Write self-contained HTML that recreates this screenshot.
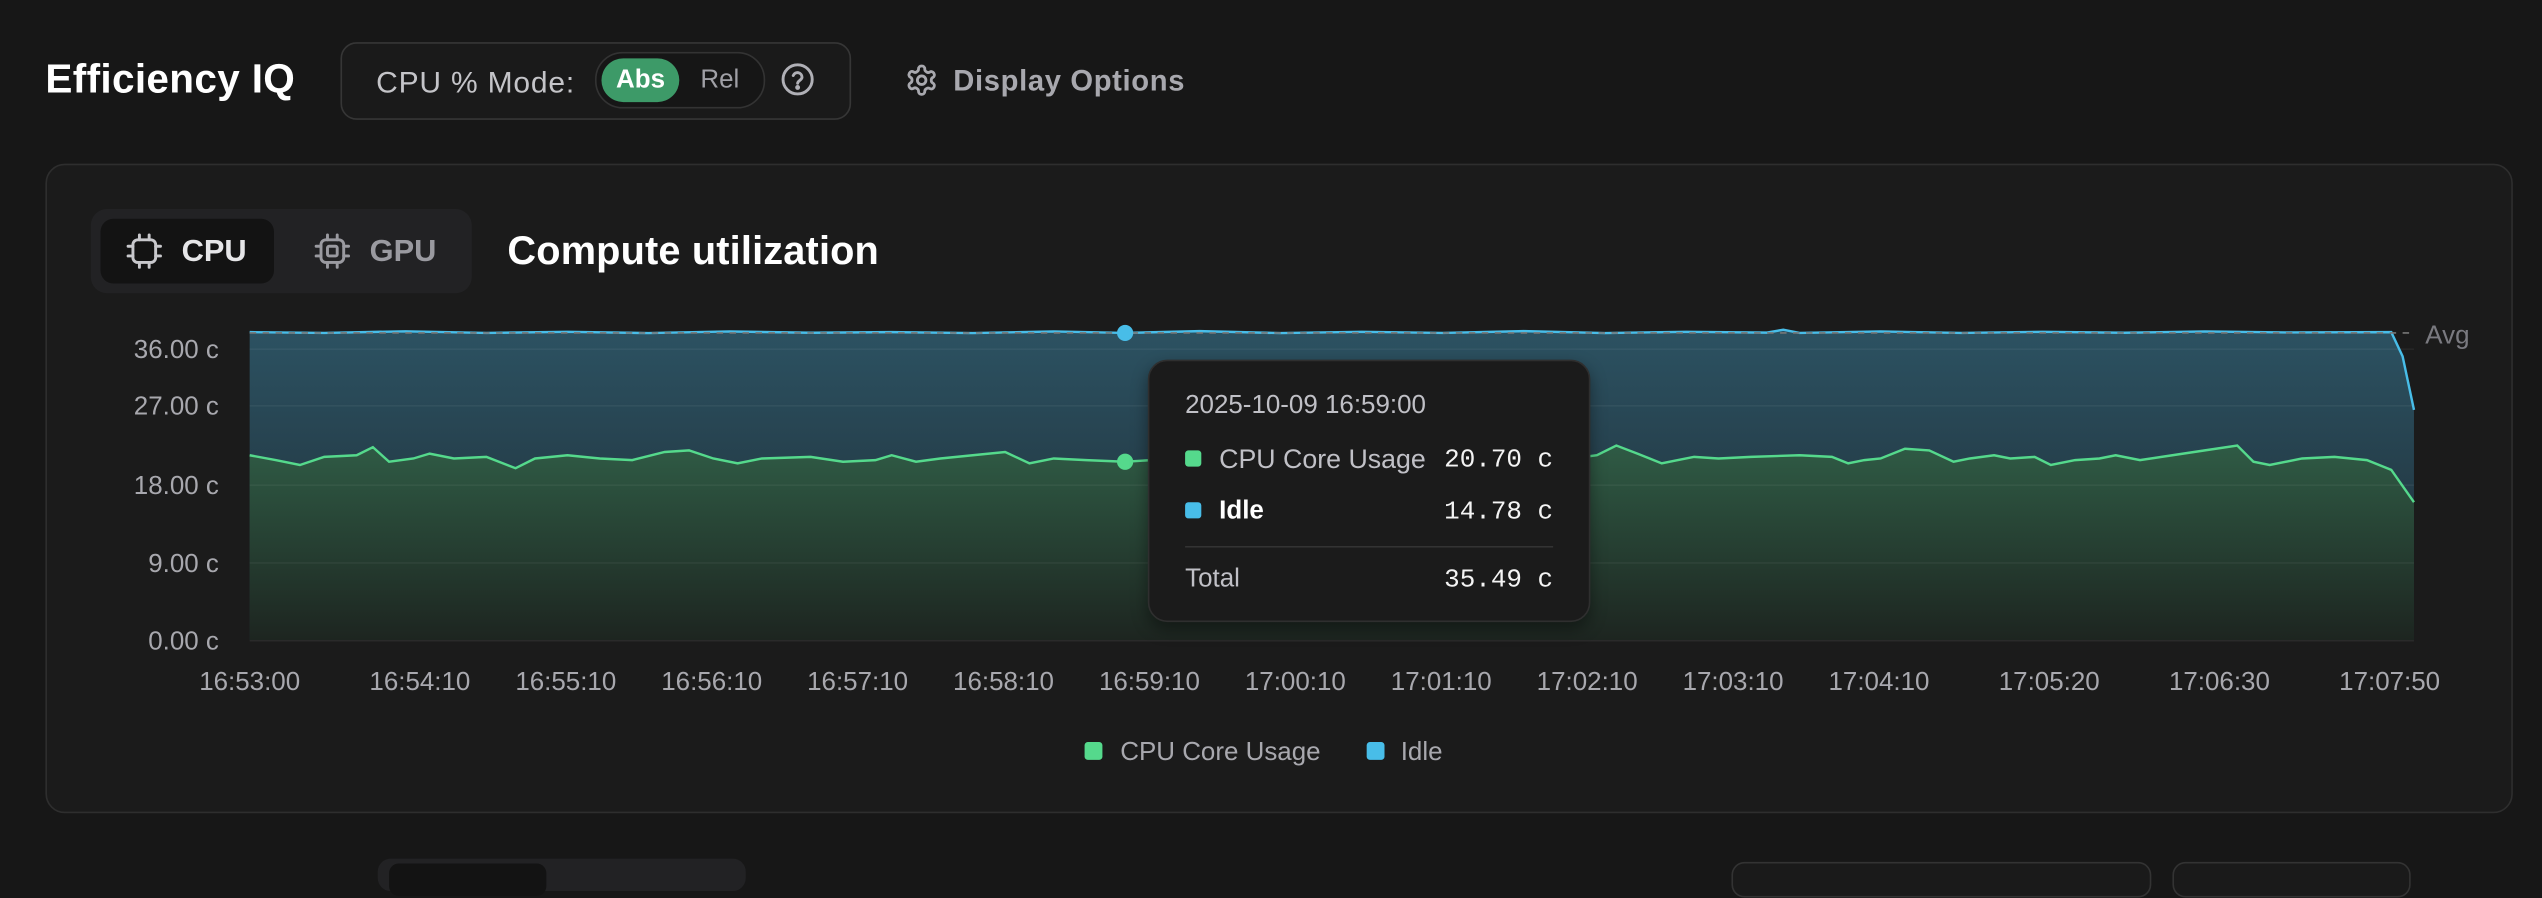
<!DOCTYPE html>
<html><head><meta charset="utf-8"><style>
html,body{margin:0;padding:0;background:#171717;width:2542px;height:870px;overflow:hidden}
#w{position:absolute;left:0;top:0;width:1568px;height:537px;transform:scale(1.6212,1.6201);transform-origin:0 0;font-family:"Liberation Sans",sans-serif;color:#fff}
.a{position:absolute;white-space:nowrap}
.mono{font-family:"Liberation Mono",monospace}
</style></head><body><div id="w">
<div class="a" style="left:28px;top:35px;font-size:25px;font-weight:bold;letter-spacing:0.2px">Efficiency IQ</div>
<div class="a" style="left:210px;top:26px;width:313px;height:46px;border:1px solid #363636;border-radius:10px;background:#1a1a1a"></div>
<div class="a" style="left:232px;top:40px;font-size:18.5px;color:#c4c4c8;letter-spacing:0.5px">CPU % Mode:</div>
<div class="a" style="left:367px;top:32px;width:103px;height:33px;border:1px solid #333;border-radius:17px;background:#161616"></div>
<div class="a" style="left:371px;top:36px;width:48px;height:27px;border-radius:14px;background:#3d9a68"></div>
<div class="a" style="left:380px;top:41px;font-size:16px;font-weight:bold">Abs</div>
<div class="a" style="left:432px;top:41px;font-size:16px;color:#a0a0a6">Rel</div>
<svg class="a" style="left:481px;top:38px" width="22" height="22" viewBox="0 0 22 22" fill="none" stroke="#b0b0b6" stroke-width="1.8"><circle cx="11" cy="11" r="9"/><path d="M8.3 8.6a2.8 2.8 0 0 1 5.4 1c0 1.8-2.7 2.3-2.7 3.8" stroke-linecap="round"/><circle cx="11" cy="16" r="0.6" fill="#b0b0b6"/></svg>
<svg class="a" style="left:558px;top:39px" width="21" height="21" viewBox="0 0 24 24" fill="none" stroke="#a8a8ae" stroke-width="2" stroke-linecap="round" stroke-linejoin="round"><path d="M12.2 2h-.4a2 2 0 0 0-2 2v.2a2 2 0 0 1-1 1.7l-.4.3a2 2 0 0 1-2 0l-.2-.1a2 2 0 0 0-2.7.7l-.2.4a2 2 0 0 0 .7 2.7l.2.1a2 2 0 0 1 1 1.7v.5a2 2 0 0 1-1 1.7l-.2.1a2 2 0 0 0-.7 2.7l.2.4a2 2 0 0 0 2.7.7l.2-.1a2 2 0 0 1 2 0l.4.3a2 2 0 0 1 1 1.7V20a2 2 0 0 0 2 2h.4a2 2 0 0 0 2-2v-.2a2 2 0 0 1 1-1.7l.4-.3a2 2 0 0 1 2 0l.2.1a2 2 0 0 0 2.7-.7l.2-.4a2 2 0 0 0-.7-2.7l-.2-.1a2 2 0 0 1-1-1.7v-.5a2 2 0 0 1 1-1.7l.2-.1a2 2 0 0 0 .7-2.7l-.2-.4a2 2 0 0 0-2.7-.7l-.2.1a2 2 0 0 1-2 0l-.4-.3a2 2 0 0 1-1-1.7V4a2 2 0 0 0-2-2z"/><circle cx="12" cy="12" r="3"/></svg>
<div class="a" style="left:588px;top:40px;font-size:18px;font-weight:bold;color:#a8a8ae;letter-spacing:0.4px">Display Options</div>

<div class="a" style="left:28px;top:101px;width:1520px;height:399px;border:1px solid #2e2e2e;border-radius:12px;background:#1b1b1b"></div>
<div class="a" style="left:56px;top:129px;width:235px;height:52px;border-radius:10px;background:#222224"></div>
<div class="a" style="left:62px;top:135px;width:107px;height:40px;border-radius:8px;background:#131313"></div>
<svg class="a" style="left:78px;top:144px" width="22" height="22" viewBox="0 0 22 22" fill="none" stroke="#c8c8cc" stroke-width="1.8" stroke-linecap="round"><rect x="4" y="4" width="14" height="14" rx="3"/><path d="M8 1v3M14 1v3M8 18v3M14 18v3M1 8h3M1 14h3M18 8h3M18 14h3"/></svg>
<div class="a" style="left:112px;top:145px;font-size:19px;font-weight:bold;color:#e6e6e8">CPU</div>
<svg class="a" style="left:194px;top:144px" width="22" height="22" viewBox="0 0 22 22" fill="none" stroke="#9a9aa0" stroke-width="1.8" stroke-linecap="round"><rect x="4" y="4" width="14" height="14" rx="3"/><rect x="8" y="8" width="6" height="6" rx="1"/><path d="M8 1v3M14 1v3M8 18v3M14 18v3M1 8h3M1 14h3M18 8h3M18 14h3"/></svg>
<div class="a" style="left:228px;top:145px;font-size:19px;font-weight:bold;color:#9a9aa0">GPU</div>
<div class="a" style="left:313px;top:142px;font-size:24.5px;font-weight:bold;letter-spacing:0.1px">Compute utilization</div>

<svg class="a" style="left:0;top:0" width="1568" height="537">
<defs>
<linearGradient id="gb" x1="0" y1="0" x2="0" y2="1"><stop offset="0" stop-color="#2c5262"/><stop offset="1" stop-color="#1e2a32"/></linearGradient>
<linearGradient id="gg" x1="0" y1="0" x2="0" y2="1"><stop offset="0" stop-color="#2f5b45"/><stop offset="1" stop-color="#1d2520"/></linearGradient>
</defs>
<path d="M154 205 L200 205.5 250 204.5 300 205.5 350 204.8 400 205.6 450 204.6 500 205.4 550 205 600 205.6 650 204.6 694 205.5 740 204.4 790 205.6 840 204.8 890 205.5 940 204.4 990 205.6 1040 204.8 1090 205.3 1100 203.5 1110 205.5 1160 204.6 1210 205.5 1260 204.8 1310 205.4 1360 204.6 1410 205.2 1475 205 L1482 220 1489 253 L1489 395 L154 395Z" fill="url(#gb)"/>
<path d="M154 281 L170 284 185 287 200 282 220 281 230 276 240 285 255 283 265 280 280 283 300 282 318 289 330 283 350 281 370 283 390 284 410 279 425 278 440 283 455 286 470 283 500 282 520 285 540 284 550 281 565 285 580 283 600 281 620 279 635 286 650 283 670 284 694 285 710 284 730 283 760 282 790 284 820 283 850 283 880 284 910 282 940 283 970 283 985 281 997 275 1010 280 1025 286 1035 284 1045 282 1060 283 1080 282 1110 281 1130 282 1140 286 1150 284 1160 283 1175 277 1190 278 1205 285 1215 283 1230 281 1240 283 1255 282 1265 287 1280 284 1295 283 1305 281 1320 284 1340 281 1360 278 1380 275 1390 285 1400 287 1420 283 1440 282 1460 284 1475 290 1489 310 L1489 395 L154 395Z" fill="url(#gg)"/>
<path d="M154 215.5H1489M154 250.5H1489M154 299.5H1489M154 347.5H1489" stroke="#ffffff" stroke-opacity="0.05"/>
<path d="M154 395.5H1489" stroke="#2a2a2a"/>
<path d="M154 205 L200 205.5 250 204.5 300 205.5 350 204.8 400 205.6 450 204.6 500 205.4 550 205 600 205.6 650 204.6 694 205.5 740 204.4 790 205.6 840 204.8 890 205.5 940 204.4 990 205.6 1040 204.8 1090 205.3 1100 203.5 1110 205.5 1160 204.6 1210 205.5 1260 204.8 1310 205.4 1360 204.6 1410 205.2 1475 205 L1482 220 1489 253" fill="none" stroke="#48bde8" stroke-width="1.5"/>
<path d="M154 205.5H1489" stroke="#777" stroke-dasharray="4 4" stroke-width="1"/>
<path d="M154 281 L170 284 185 287 200 282 220 281 230 276 240 285 255 283 265 280 280 283 300 282 318 289 330 283 350 281 370 283 390 284 410 279 425 278 440 283 455 286 470 283 500 282 520 285 540 284 550 281 565 285 580 283 600 281 620 279 635 286 650 283 670 284 694 285 710 284 730 283 760 282 790 284 820 283 850 283 880 284 910 282 940 283 970 283 985 281 997 275 1010 280 1025 286 1035 284 1045 282 1060 283 1080 282 1110 281 1130 282 1140 286 1150 284 1160 283 1175 277 1190 278 1205 285 1215 283 1230 281 1240 283 1255 282 1265 287 1280 284 1295 283 1305 281 1320 284 1340 281 1360 278 1380 275 1390 285 1400 287 1420 283 1440 282 1460 284 1475 290 1489 310" fill="none" stroke="#55d98c" stroke-width="1.5"/>
<circle cx="694" cy="205.5" r="5" fill="#48bde8"/>
<circle cx="694" cy="285" r="5" fill="#55d98c"/>
<g font-family="Liberation Sans" font-size="16" fill="#a8a8ae" text-anchor="end">
<text x="135" y="221">36.00 c</text><text x="135" y="256">27.00 c</text><text x="135" y="305">18.00 c</text><text x="135" y="353">9.00 c</text><text x="135" y="401">0.00 c</text></g>
<text x="1496" y="212" font-family="Liberation Sans" font-size="16" fill="#7a7a80">Avg</text>
<g font-family="Liberation Sans" font-size="16" fill="#a8a8ae" text-anchor="middle">
<text x="154" y="426">16:53:00</text><text x="259" y="426">16:54:10</text><text x="349" y="426">16:55:10</text><text x="439" y="426">16:56:10</text><text x="529" y="426">16:57:10</text><text x="619" y="426">16:58:10</text><text x="709" y="426">16:59:10</text><text x="799" y="426">17:00:10</text><text x="889" y="426">17:01:10</text><text x="979" y="426">17:02:10</text><text x="1069" y="426">17:03:10</text><text x="1159" y="426">17:04:10</text><text x="1264" y="426">17:05:20</text><text x="1369" y="426">17:06:30</text><text x="1474" y="426">17:07:50</text></g>
<rect x="669" y="458" width="11" height="11" rx="2" fill="#55d98c"/>
<text x="691" y="469" font-family="Liberation Sans" font-size="16" fill="#a8a8ae">CPU Core Usage</text>
<rect x="843" y="458" width="11" height="11" rx="2" fill="#48bde8"/>
<text x="864" y="469" font-family="Liberation Sans" font-size="16" fill="#a8a8ae">Idle</text>
</svg>

<div class="a" style="left:708px;top:222px;width:271px;height:160px;border:1px solid #2f2f2f;border-radius:12px;background:#1b1b1b;box-shadow:0 4px 10px rgba(0,0,0,.4)"></div>
<div class="a" style="left:731px;top:242px;font-size:16px;color:#c0c0c6">2025-10-09 16:59:00</div>
<div class="a" style="left:731px;top:278px;width:10px;height:10px;border-radius:2px;background:#55d98c"></div>
<div class="a" style="left:752px;top:275px;font-size:16.5px;color:#c0c0c6">CPU Core Usage</div>
<div class="a mono" style="left:880px;top:275px;width:78px;text-align:right;font-size:16px;color:#f4f4f4">20.70 c</div>
<div class="a" style="left:731px;top:310px;width:10px;height:10px;border-radius:2px;background:#48bde8"></div>
<div class="a" style="left:752px;top:307px;font-size:16px;font-weight:bold">Idle</div>
<div class="a mono" style="left:880px;top:307px;width:78px;text-align:right;font-size:16px;color:#f4f4f4">14.78 c</div>
<div class="a" style="left:731px;top:337px;width:227px;height:1px;background:#333"></div>
<div class="a" style="left:731px;top:349px;font-size:16px;color:#c0c0c6">Total</div>
<div class="a mono" style="left:880px;top:349px;width:78px;text-align:right;font-size:16px;color:#f4f4f4">35.49 c</div>

<div class="a" style="left:233px;top:530px;width:227px;height:20px;border-radius:8px;background:#222224"></div>
<div class="a" style="left:240px;top:533px;width:97px;height:20px;border-radius:6px;background:#131313"></div>
<div class="a" style="left:1068px;top:532px;width:257px;height:20px;border:1px solid #333;border-radius:8px;background:#1a1a1a"></div>
<div class="a" style="left:1340px;top:532px;width:145px;height:20px;border:1px solid #333;border-radius:8px;background:#1a1a1a"></div>
</div></body></html>
